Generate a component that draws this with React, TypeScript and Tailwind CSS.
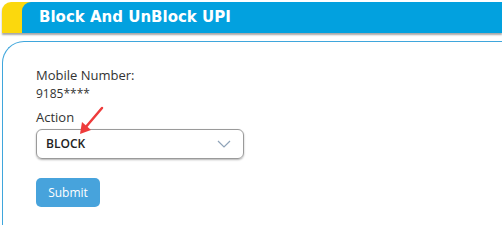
import React from "react";

export default function App() {
  return (
    <div className="relative w-[502px] h-[225px] overflow-hidden bg-white" style={{ fontFamily: '"Open Sans", sans-serif' }}>
      <div className="ml-[2px] mt-[2px] flex h-[31px] rounded-tl-[9px] bg-[#fbd80d] shadow-[0_2px_2px_rgba(0,0,0,0.35)]">
        <div className="ml-[20px] flex flex-1 items-center rounded-tl-[9px] bg-[#02a1df] pl-[17px]">
          <span className="text-[15px] font-bold text-white" style={{ fontFamily: '"DejaVu Sans", Verdana, sans-serif' }}>
            Block And UnBlock UPI
          </span>
        </div>
      </div>
      <div className="ml-[2px] mt-[8px] h-[200px] rounded-tl-[22px] border-l border-t border-[#3fa6dc] pl-[33px] pt-[24px] text-[#333]">
        <div className="text-[13px] leading-[18px]">Mobile Number:</div>
        <div className="mt-[1px] text-[12px] leading-[18px]">9185****</div>
        <div className="mt-[5px] text-[13px] leading-[18px]">Action</div>
        <div className="mt-[3px] flex h-[30px] w-[208px] items-center justify-between rounded-[6px] border border-[#9a9a9a] pl-[9px] pr-[12px] shadow-[0_1px_2px_rgba(0,0,0,0.3)]">
          <span className="text-[12px] font-semibold text-[#222]">BLOCK</span>
          <svg width="14" height="8" viewBox="0 0 14 8">
            <path d="M1 1 L7 7 L13 1" fill="none" stroke="#8fa3b8" strokeWidth="1.2" />
          </svg>
        </div>
        <button className="mt-[19px] flex h-[29px] w-[64px] items-center justify-center rounded-[5px] bg-[#47a3dc] text-[12px] text-white">
          Submit
        </button>
      </div>
      <svg className="absolute left-[76px] top-[105px]" width="30" height="32" viewBox="0 0 30 32">
        <path d="M26 3 L9 23" stroke="#ee3b3b" strokeWidth="2.5" strokeLinecap="round" />
        <path d="M4 29 L6 17 L15 25 Z" fill="#ee3b3b" />
      </svg>
    </div>
  );
}
